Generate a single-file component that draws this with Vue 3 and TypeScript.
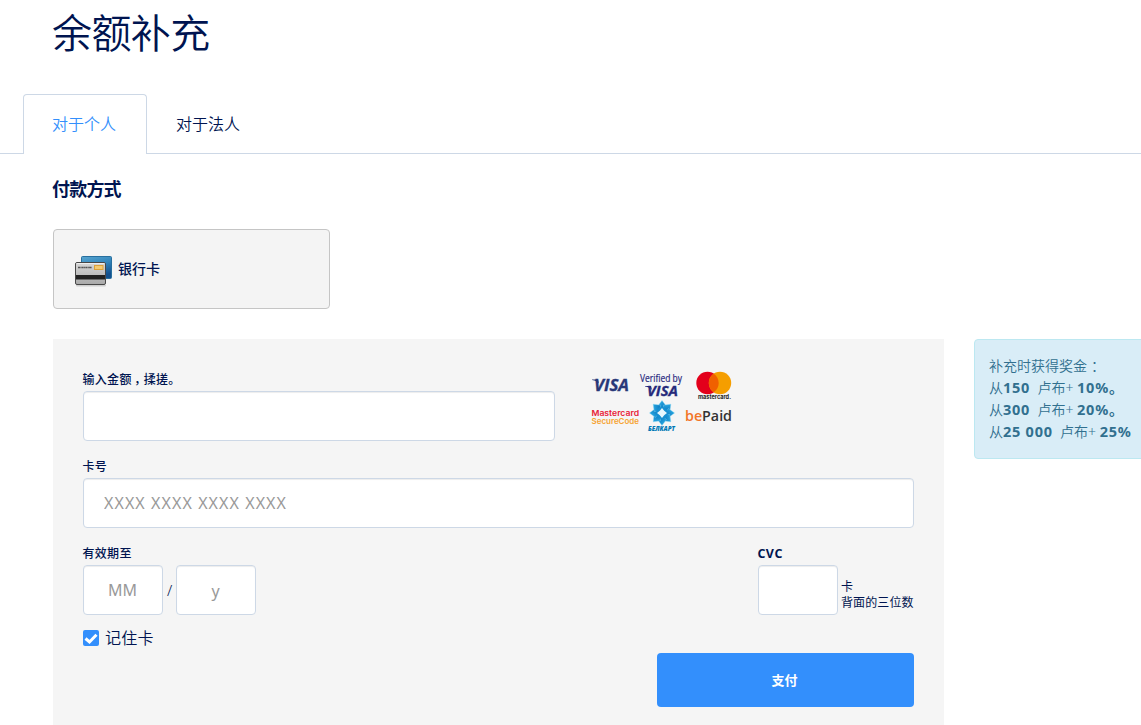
<script setup lang="ts">
import { ref } from 'vue'

interface Bonus {
  amount: string
  percent: string
  tail: string
}

const tabs: string[] = ['对于个人', '对于法人']
const activeTab = ref<number>(0)
const amount = ref<string>('')
const cardNumber = ref<string>('')
const month = ref<string>('')
const year = ref<string>('')
const cvc = ref<string>('')
const remember = ref<boolean>(true)

const bonuses: Bonus[] = [
  { amount: '150', percent: '10%', tail: '。' },
  { amount: '300', percent: '20%', tail: '。' },
  { amount: '25 000', percent: '25%', tail: '' },
]
const petals: number[] = [0, 45, 90, 135, 180, 225, 270, 315]
</script>

<template>
  <div class="page">
    <h1 class="title">余额补充</h1>
    <nav class="tabs">
      <button
        v-for="(tab, i) in tabs"
        :key="tab"
        type="button"
        class="tab"
        :class="{ active: activeTab === i }"
        @click="activeTab = i"
      >{{ tab }}</button>
    </nav>

    <h2 class="subtitle">付款方式</h2>
    <div class="method">
      <svg class="cards" width="40" height="34" viewBox="0 0 40 34">
        <defs>
          <linearGradient id="blue" x1="0" y1="0" x2="0.4" y2="1">
            <stop offset="0" stop-color="#58a5d0" />
            <stop offset="0.5" stop-color="#3386bc" />
            <stop offset="1" stop-color="#12508e" />
          </linearGradient>
          <linearGradient id="grey" x1="0" y1="0" x2="0" y2="1">
            <stop offset="0" stop-color="#d8d8d8" />
            <stop offset="1" stop-color="#a9a9a9" />
          </linearGradient>
        </defs>
        <rect x="2" y="29.5" width="30" height="2" rx="1" fill="#000" opacity="0.15" />
        <rect x="7.5" y="1.5" width="30" height="22" rx="1" fill="url(#blue)" stroke="#286f9e" />
        <rect x="1.5" y="7.5" width="30" height="22" rx="1.5" fill="url(#grey)" stroke="#484848" />
        <path d="M2.5 8.5h28" stroke="#eee" />
        <rect x="2" y="20" width="29" height="4.5" fill="#222" />
        <rect x="20.5" y="10.5" width="8.5" height="4" fill="#f4ca70" stroke="#dca13a" />
        <path d="M4 12.5h14" stroke="#555" stroke-width="1.5" stroke-dasharray="2 .4 1 .3" />
      </svg>
      <span>银行卡</span>
    </div>

    <div class="content">
      <form class="form" @submit.prevent>
        <div class="top-row">
          <label class="field amount">
            <span class="label">输入金额<span class="comma">，</span>揉搓。</span>
            <input v-model="amount" type="text">
          </label>
          <svg class="logos" width="150" height="66" viewBox="0 0 150 66">
            <defs>
              <linearGradient id="sun" x1="0" y1="0" x2="1" y2="1">
                <stop offset="0" stop-color="#35b9ee" />
                <stop offset="1" stop-color="#0069b4" />
              </linearGradient>
            </defs>
            <text x="4" y="22" class="visa" textLength="35" lengthAdjust="spacingAndGlyphs">VISA</text>
            <path d="M2 10.6h6l1 4q-2-3-7-3.5z" fill="#283878" />
            <text x="50" y="13" class="verified" textLength="42" lengthAdjust="spacingAndGlyphs">Verified by</text>
            <text x="57" y="27" class="visa second" textLength="31" lengthAdjust="spacingAndGlyphs">VISA</text>
            <path d="M55 17h6l1 4q-2-3-7-3.5z" fill="#26277d" />
            <circle cx="117.5" cy="14" r="11.2" fill="#e3001b" />
            <circle cx="130" cy="14" r="11.2" fill="#f59e00" />
            <path d="M123.75 4.7a11.2 11.2 0 0 1 0 18.6a11.2 11.2 0 0 1 0-18.600z" fill="#f06000" />
            <text x="108" y="30" class="mastercard" textLength="33" lengthAdjust="spacingAndGlyphs">mastercard.</text>
            <text x="1.5" y="47" class="secure red" textLength="47.5" lengthAdjust="spacingAndGlyphs">Mastercard</text>
            <text x="1.5" y="55" class="secure orange" textLength="47.5" lengthAdjust="spacingAndGlyphs">SecureCode</text>
            <g transform="translate(72 44)">
              <path
                v-for="angle in petals"
                :key="angle"
                d="M0-3L-4.5-6.5L0-12.5L4.5-6.5Z"
                fill="url(#sun)"
                stroke="#7fd3f3"
                stroke-width=".4"
                :transform="`rotate(${angle})`"
              />
              <circle r="6" fill="#168fd1" />
              <path d="M0-5L2.2-2.2L5 0L2.2 2.2L0 5L-2.2 2.2L-5 0L-2.2-2.2Z" fill="#e6f7fd" />
            </g>
            <text x="58" y="62" class="belkart" textLength="27" lengthAdjust="spacingAndGlyphs">БЕЛКАРТ</text>
            <text x="95" y="51.5" class="bepaid" textLength="47" lengthAdjust="spacingAndGlyphs"><tspan fill="#f27427">be</tspan>Paid</text>
          </svg>
        </div>

        <label class="field">
          <span class="label">卡号</span>
          <input v-model="cardNumber" class="card-number" type="text" placeholder="XXXX XXXX XXXX XXXX">
        </label>

        <div class="details">
          <div class="field">
            <span class="label">有效期至</span>
            <div class="expiry">
              <input v-model="month" class="small" type="text" placeholder="MM">
              <span class="slash">/</span>
              <input v-model="year" class="small year" type="text" placeholder="y">
            </div>
          </div>
          <div class="field">
            <span class="label cvc">CVC</span>
            <div class="expiry">
              <input v-model="cvc" class="small" type="text">
              <span class="hint">卡<br>背面的三位数</span>
            </div>
          </div>
        </div>

        <label class="remember">
          <input v-model="remember" type="checkbox">
          <span class="box">
            <svg v-if="remember" width="16" height="16" viewBox="0 0 16 16">
              <path d="M2.5 8.5l4 3.5L13.5 4.8" fill="none" stroke="#fff" stroke-width="3" />
            </svg>
          </span>
          <span>记住卡</span>
        </label>
        <button type="submit" class="pay">支付</button>
      </form>

      <aside class="bonus">
        <p>补充时获得奖金<span class="colon">：</span></p>
        <p v-for="bonus in bonuses" :key="bonus.amount">从<b>{{ bonus.amount }}</b>&nbsp; 卢布+ <b>{{ bonus.percent }}{{ bonus.tail }}</b></p>
      </aside>
    </div>
  </div>
</template>

<style>
body {
  background: #fff;
  overflow: hidden;
}
</style>

<style scoped>
* {
  box-sizing: border-box;
}
.page {
  width: 1141px;
  height: 725px;
  overflow: hidden;
  color: #001450;
  font-family: "Noto Sans", "Noto Sans CJK SC", sans-serif;
  font-size: 16px;
}
.title {
  height: 94px;
  margin: 0;
  padding: 4px 0 0 52px;
  font-size: 40px;
  line-height: 58px;
  font-weight: 350;
  letter-spacing: -0.6px;
}
.tabs {
  display: flex;
  height: 60px;
  padding-left: 23px;
  border-bottom: 1px solid #cdd8e6;
}
.tab {
  width: 124px;
  height: 60px;
  padding: 0 2px 2px 0;
  background: #fff;
  border: 1px solid transparent;
  border-bottom: 0;
  border-radius: 4px 4px 0 0;
  color: #001450;
  font: inherit;
  font-weight: 350;
}
.tab:not(.active) {
  height: 59px;
}
.tab.active {
  padding-bottom: 3px;
  color: #338ffc;
  border-color: #cdd8e6;
}
.subtitle {
  height: 75px;
  margin: 0;
  padding: 20px 0 0 52px;
  font-size: 18px;
  line-height: 30px;
  font-weight: 700;
  letter-spacing: -0.8px;
}
.method {
  display: flex;
  align-items: center;
  width: 277px;
  height: 80px;
  margin-left: 53px;
  padding: 0 0 2px 20px;
  background: #f4f4f4;
  border: 1px solid #c5c5c5;
  border-radius: 4px;
  font-size: 14px;
  font-weight: 500;
}
.method span {
  margin-left: 4px;
}
.cards {
  margin-top: 7px;
}
.content {
  display: flex;
  align-items: flex-start;
  gap: 30px;
  margin: 30px 0 0 53px;
}
.form {
  flex: 0 0 891px;
  display: flex;
  flex-direction: column;
  height: 400px;
  padding: 30px;
  background: #f5f5f5;
}
.top-row {
  display: flex;
  justify-content: space-between;
  height: 87px;
}
.amount {
  width: 472px;
}
.field {
  display: block;
  height: 87px;
}
.label {
  display: block;
  height: 22px;
  font-size: 12px;
  line-height: 21px;
  font-weight: 500;
  letter-spacing: 0.3px;
  text-indent: -0.5px;
}
.cvc {
  font-family: "Open Sans", sans-serif;
  font-size: 12.5px;
  font-weight: 700;
  letter-spacing: 0.4px;
}
.comma {
  display: inline-block;
  width: 12px;
  padding-left: 3px;
}
.colon {
  padding-left: 4px;
}
input {
  display: block;
  width: 100%;
  height: 50px;
  padding: 0 20px;
  border: 1px solid #cdd8e6;
  border-radius: 4px;
  outline: none;
  background: #fff;
  box-shadow: inset 0 1px 1px rgba(0, 0, 0, 0.075);
  color: #001450;
  font: inherit;
}
input::placeholder {
  color: #999;
  opacity: 1;
}
.card-number {
  letter-spacing: 1.08px;
}
.logos {
  margin-right: 174px;
}
.visa {
  font: italic 700 16px "Open Sans", sans-serif;
  fill: #283878;
  stroke: #283878;
  stroke-width: 0.3px;
}
.second {
  font-size: 14px;
  fill: #26277d;
}
.verified {
  font: 10px "Open Sans", sans-serif;
  fill: #26277d;
  stroke: #26277d;
  stroke-width: 0.2px;
}
.mastercard {
  font: 700 6px Inter, sans-serif;
  fill: #222;
}
.secure {
  font: 600 8px Inter, sans-serif;
}
.red {
  fill: #e82035;
}
.orange {
  fill: #f6a332;
}
.belkart {
  font: italic 800 6.5px "Open Sans", sans-serif;
  fill: #0078b5;
}
.bepaid {
  font: 600 14px "Open Sans", sans-serif;
  fill: #333;
}
.details {
  display: flex;
  justify-content: space-between;
}
.expiry {
  display: flex;
}
.small {
  width: 80px;
  padding: 0 1px 0 0;
  text-align: center;
}
.year {
  padding-top: 2px;
}
.slash {
  width: 13px;
  text-align: center;
  font-size: 15px;
  font-weight: 300;
  line-height: 50px;
}
.hint {
  width: 72px;
  margin: 14px 1px 0 3px;
  font-size: 12px;
  font-weight: 400;
  line-height: 16px;
  letter-spacing: 0.1px;
  white-space: nowrap;
}
.remember {
  display: flex;
  align-items: center;
  height: 24px;
  margin-top: -4px;
  font-weight: 350;
  line-height: 24px;
  letter-spacing: 0.3px;
}
.remember input {
  display: none;
}
.box {
  width: 16px;
  height: 16px;
  margin-right: 6px;
  background: #338ffc;
  border-radius: 2px;
}
.box svg {
  display: block;
}
.pay {
  align-self: flex-end;
  width: 257px;
  height: 54px;
  margin-top: 3px;
  padding: 0 2px 1px 0;
  border: 0;
  border-radius: 4px;
  background: #338ffc;
  color: #fff;
  font: inherit;
  font-size: 13px;
  font-weight: 700;
}
.bonus {
  flex: 0 0 220px;
  height: 120px;
  padding: 15px 14px;
  background: #d9edf7;
  border: 1px solid #bce8f1;
  border-radius: 4px;
  color: #31708f;
  font-size: 14px;
  font-weight: 350;
  line-height: 22px;
  white-space: nowrap;
}
.bonus p {
  height: 22px;
  margin: 0;
}
.bonus b {
  font-size: 14.5px;
  line-height: 20px;
  font-weight: 700;
  letter-spacing: 0.75px;
}
</style>
